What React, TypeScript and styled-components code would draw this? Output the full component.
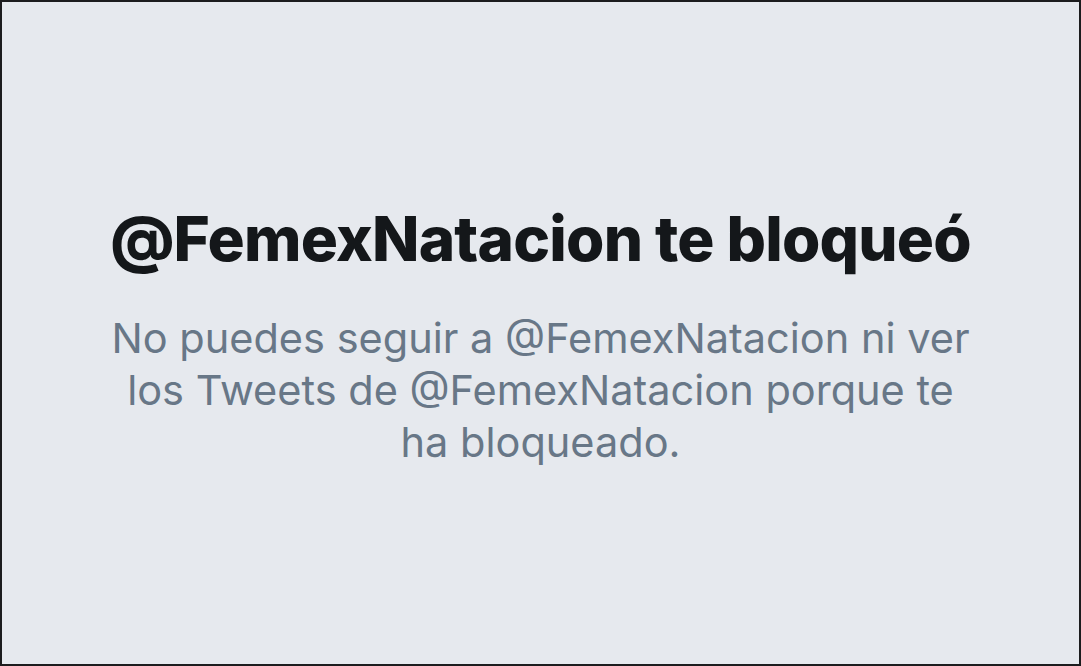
import React from "react"
import styled, { createGlobalStyle } from "styled-components"

const GlobalStyle = createGlobalStyle`
    html, body {
        margin: 0;
        padding: 0;
        background: #e6e9ee;
    }
    #root { height: 100vh; }
`

const Frame = styled.main`
    box-sizing: border-box;
    height: 666px;
    width: 1081px;
    border: 2px solid #1c1c1e;
    background-color: #e6e9ee;
    display: flex;
    flex-direction: column;
    align-items: center;
    justify-content: center;
    padding-top: 4px;
    font-family: Inter, "Noto Sans", sans-serif;
    text-align: center;
`

const Title = styled.h1`
    margin: 0 0 36px;
    font-size: 62px;
    font-weight: 800;
    letter-spacing: -0.8px;
    line-height: 1.2;
    color: #14171a;
`

const Message = styled.p`
    margin: 0;
    max-width: 864px;
    font-size: 41.5px;
    font-weight: 400;
    line-height: 52px;
    color: #687787;
`

const BlockedNotice: React.FC = () => {
    return (
        <>
            <GlobalStyle />
            <Frame>
                <Title>@FemexNatacion te bloqueó</Title>
                <Message>
                    No puedes seguir a @FemexNatacion ni ver los Tweets de @FemexNatacion porque te ha bloqueado.
                </Message>
            </Frame>
        </>
    )
}

export default BlockedNotice
